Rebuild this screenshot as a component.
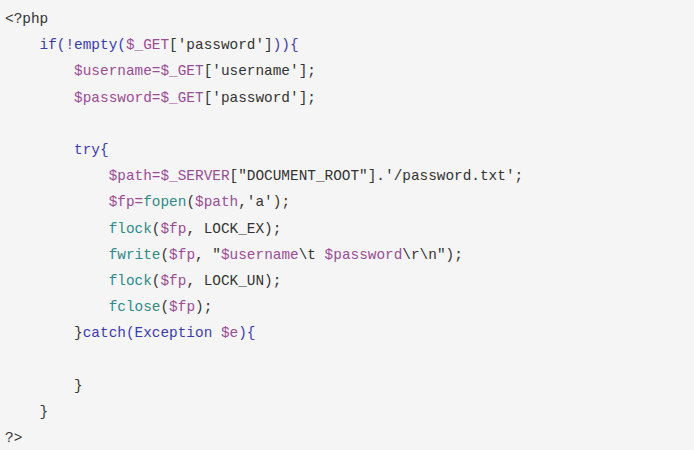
const KW = "text-[#3b3bb0]";
const VAR = "text-[#9a4c94]";
const FN = "text-[#2f8a88]";
const TXT = "text-[#333333]";

type Seg = [string, string];

const lines: { indent: number; segs: Seg[] }[] = [
  { indent: 0, segs: [["<?php", TXT]] },
  {
    indent: 1,
    segs: [
      ["if(!empty(", KW],
      ["$_GET", VAR],
      ["['password']", TXT],
      [")){", KW],
    ],
  },
  {
    indent: 2,
    segs: [
      ["$username=$_GET", VAR],
      ["['username'];", TXT],
    ],
  },
  {
    indent: 2,
    segs: [
      ["$password=$_GET", VAR],
      ["['password'];", TXT],
    ],
  },
  { indent: 0, segs: [] },
  { indent: 2, segs: [["try{", KW]] },
  {
    indent: 3,
    segs: [
      ["$path=$_SERVER", VAR],
      ['["DOCUMENT_ROOT"].\'/password.txt\';', TXT],
    ],
  },
  {
    indent: 3,
    segs: [
      ["$fp=", VAR],
      ["fopen", FN],
      ["(", TXT],
      ["$path", VAR],
      [",'a');", TXT],
    ],
  },
  {
    indent: 3,
    segs: [
      ["flock", FN],
      ["(", TXT],
      ["$fp", VAR],
      [", LOCK_EX);", TXT],
    ],
  },
  {
    indent: 3,
    segs: [
      ["fwrite", FN],
      ["(", TXT],
      ["$fp", VAR],
      [', "', TXT],
      ["$username", VAR],
      ["\\t ", TXT],
      ["$password", VAR],
      ['\\r\\n");', TXT],
    ],
  },
  {
    indent: 3,
    segs: [
      ["flock", FN],
      ["(", TXT],
      ["$fp", VAR],
      [", LOCK_UN);", TXT],
    ],
  },
  {
    indent: 3,
    segs: [
      ["fclose", FN],
      ["(", TXT],
      ["$fp", VAR],
      [");", TXT],
    ],
  },
  {
    indent: 2,
    segs: [
      ["}", TXT],
      ["catch(Exception ", KW],
      ["$e", VAR],
      ["){", KW],
    ],
  },
  { indent: 0, segs: [] },
  { indent: 2, segs: [["}", TXT]] },
  { indent: 1, segs: [["}", TXT]] },
  { indent: 0, segs: [["?>", TXT]] },
];

export default function App() {
  return (
    <div className="w-[694px] h-[450px] bg-[#f5f5f5] overflow-hidden">
      <pre className="pt-[6px] pl-[5px] font-mono text-[14.4px] leading-[26.2px] text-[#333333]">
        {lines.map((line, i) => (
          <div key={i} className="h-[26.2px]">
            {"    ".repeat(line.indent)}
            {line.segs.map(([t, c], j) => (
              <span key={j} className={c}>
                {t}
              </span>
            ))}
          </div>
        ))}
      </pre>
    </div>
  );
}
